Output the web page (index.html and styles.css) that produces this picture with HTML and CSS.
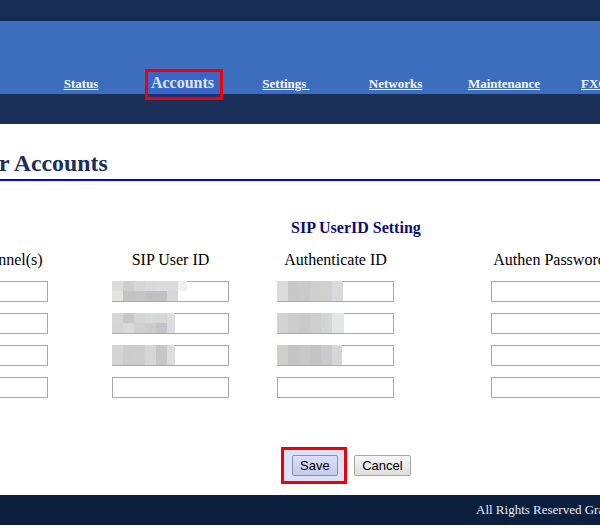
FILE: index.html
```html
<!DOCTYPE html>
<html lang="en">
<head>
<meta charset="utf-8">
<title>Accounts</title>
<link rel="stylesheet" href="styles.css">
</head>
<body>
<header class="masthead">
  <div class="topbar"></div>
  <nav class="menu">
    <a class="tab" href="#">Status</a>
    <a class="tab current" href="#">Accounts</a>
    <a class="tab" href="#">Settings&nbsp;</a>
    <a class="tab" href="#">Networks</a>
    <a class="tab" href="#">Maintenance</a>
    <a class="tab" href="#">FXO Lines</a>
  </nav>
  <div class="subbar"></div>
</header>

<main class="content">
  <h1 class="page-title">User Accounts</h1>
  <h2 class="section-title">SIP UserID Setting</h2>

  <div class="accounts">
    <div class="col-head">Channel(s)</div>
    <div class="col-head">SIP User ID</div>
    <div class="col-head">Authenticate ID</div>
    <div class="col-head">Authen Password</div>

    <div class="field narrow"><input type="text"></div>
    <div class="field"><input type="text"><span class="mosaic m-a"></span></div>
    <div class="field"><input type="text"><span class="mosaic m-d"></span></div>
    <div class="field"><input type="password"></div>

    <div class="field narrow"><input type="text"></div>
    <div class="field"><input type="text"><span class="mosaic m-b"></span></div>
    <div class="field"><input type="text"><span class="mosaic m-e"></span></div>
    <div class="field"><input type="password"></div>

    <div class="field narrow"><input type="text"></div>
    <div class="field"><input type="text"><span class="mosaic m-c"></span></div>
    <div class="field"><input type="text"><span class="mosaic m-f"></span></div>
    <div class="field"><input type="password"></div>

    <div class="field narrow"><input type="text"></div>
    <div class="field"><input type="text"></div>
    <div class="field"><input type="text"></div>
    <div class="field"><input type="password"></div>
  </div>

  <div class="actions">
    <span class="highlight"><button class="btn btn-save" type="button">Save</button></span>
    <button class="btn btn-cancel" type="button">Cancel</button>
  </div>
</main>

<footer class="footer">All Rights Reserved Grandstream Networks, Inc.</footer>
</body>
</html>
```

FILE: styles.css
```css
html, body {
  margin: 0;
  padding: 0;
  overflow: hidden;
  background: #ffffff;
}

body {
  font-family: "Liberation Serif", "Times New Roman", serif;
  color: #000;
}

/* ---------- header ---------- */
.topbar {
  height: 21px;
  background: #172c55;
}

.menu {
  height: 73px;
  background: #3d6ebe;
  display: grid;
  grid-template-columns: 102px 104px 100px 119px 98px 117px;
  padding-left: 30px;
  align-items: start;
}

.tab {
  justify-self: center;
  margin-top: 55px;
  font-size: 13px;
  font-weight: bold;
  line-height: 15px;
  color: #f4f7ff;
  text-decoration: underline;
  white-space: nowrap;
}

.tab.current {
  position: relative;
  z-index: 1;
  margin-top: 48px;
  border: 3px solid #f00000;
  padding: 1.5px 6px 5.5px 3px;
  font-size: 16px;
  line-height: 18px;
  color: #dde5f7;
  text-decoration: none;
  background: linear-gradient(#3866c9 0 22px, #1a3278 22px 100%);
}

.subbar {
  height: 30px;
  background: #1a2f57;
}

/* ---------- content ---------- */
.content {
  padding-top: 26px;
}

.page-title {
  margin: 0;
  font-size: 23.8px;
  font-weight: bold;
  line-height: 27px;
  color: #1b2f5a;
  text-indent: -38px;
  white-space: nowrap;
  padding-bottom: 2px;
  border-bottom: 2px solid #0000f0;
}

.section-title {
  margin: 38px 0 0 291px;
  font-size: 16px;
  font-weight: bold;
  line-height: 18px;
  color: #0c0c78;
  white-space: nowrap;
}

.accounts {
  margin: 14px 0 0 -74px;
  display: grid;
  grid-template-columns: 163px 163px 167px 261px;
  row-gap: 11px;
  justify-items: center;
}

.col-head {
  font-size: 16px;
  line-height: 18px;
  margin-bottom: 1px;
  white-space: nowrap;
}

.field {
  position: relative;
  width: 117px;
  height: 21px;
}

.field.narrow {
  width: 80px;
}

.field input {
  display: block;
  box-sizing: border-box;
  width: 100%;
  height: 100%;
  margin: 0;
  padding: 0 2px;
  border: 1px solid #a9a9a9;
  border-radius: 0;
  background: #fff;
  font: 13px "Liberation Sans", Arial, sans-serif;
}

.mosaic {
  position: absolute;
  left: 0;
  top: 0;
  height: 20px;
  background-repeat: no-repeat;
}

.m-a {
  width: 75px;
  background-image:
    linear-gradient(90deg, #dcdcdc 0 11px, #cfcfcf 11px 22px, #d6d8d8 22px 33px, #d9dbdb 33px 44px, #dcdcdc 44px 55px, #dadcdc 55px 66px, #efefef 66px 75px),
    linear-gradient(90deg, #e2e2e0 0 11px, #c4c4c4 11px 22px, #c5c5c5 22px 33px, #c0c0c2 33px 44px, #c0c0c4 44px 55px, #d4d8d8 55px 66px, #ffffff 66px 75px);
  background-size: 100% 10px, 100% 10px;
  background-position: 0 0, 0 10px;
}

.m-b {
  width: 63px;
  background-image:
    linear-gradient(90deg, #d6d6d6 0 11px, #c8c8cc 11px 22px, #d4d6d6 22px 33px, #d8dada 33px 44px, #d6d8d6 44px 55px, #dcdede 55px 63px),
    linear-gradient(90deg, #d4d4d4 0 11px, #dadcdc 11px 22px, #d0d0d0 22px 33px, #cccccc 33px 44px, #c4c4c8 44px 55px, #d8dcdc 55px 63px);
  background-size: 100% 10px, 100% 10px;
  background-position: 0 0, 0 10px;
}

.m-c {
  width: 63px;
  background-image: linear-gradient(90deg, #d4d4d4 0 11px, #cccccc 11px 22px, #cdcdcd 22px 33px, #d6d6d6 33px 44px, #c6c6ca 44px 55px, #dcdcdc 55px 63px);
}

.m-d {
  width: 66px;
  background-image: linear-gradient(90deg, #dcdcdc 0 11px, #c8c8c8 11px 22px, #cacaca 22px 33px, #cfcfcf 33px 44px, #d0d0d0 44px 55px, #d8dadf 55px 66px);
}

.m-e {
  width: 67px;
  background-image: linear-gradient(90deg, #d2d2d2 0 11px, #cccccc 11px 22px, #cac8ca 22px 33px, #cecece 33px 44px, #d4d6d6 44px 55px, #e2e6e6 55px 67px);
}

.m-f {
  width: 65px;
  background-image: linear-gradient(90deg, #d2ceca 0 11px, #c4c4c6 11px 22px, #c8c8c8 22px 33px, #c4c4c4 33px 44px, #cacacc 44px 55px, #d6d6d6 55px 65px);
}

/* ---------- actions ---------- */
.actions {
  margin-top: 49px;
  padding-left: 281px;
  display: flex;
  align-items: center;
  gap: 7px;
}

.highlight {
  display: inline-flex;
  border: 3px solid #f00000;
  padding: 5px 6px 5px 8px;
  background: #dbe0fb;
}

.btn {
  box-sizing: border-box;
  height: 21px;
  margin: 0;
  padding: 0 7px;
  font: 13px "Liberation Sans", Arial, sans-serif;
  color: #000;
  border: 1px solid #a6a6a6;
  border-radius: 2px;
  background: linear-gradient(#f7f7f7, #dedede);
}

.btn-cancel {
  padding: 0 7.5px;
}

.btn-save {
  border-color: #8c8fa8;
  background: linear-gradient(#dadef6, #c6cbea);
}

/* ---------- footer ---------- */
.footer {
  margin-top: 11px;
  height: 30px;
  line-height: 30px;
  padding-left: 476px;
  background: #0c1f3f;
  color: #e6ecf5;
  font-size: 13px;
  white-space: nowrap;
  overflow: hidden;
}
```
